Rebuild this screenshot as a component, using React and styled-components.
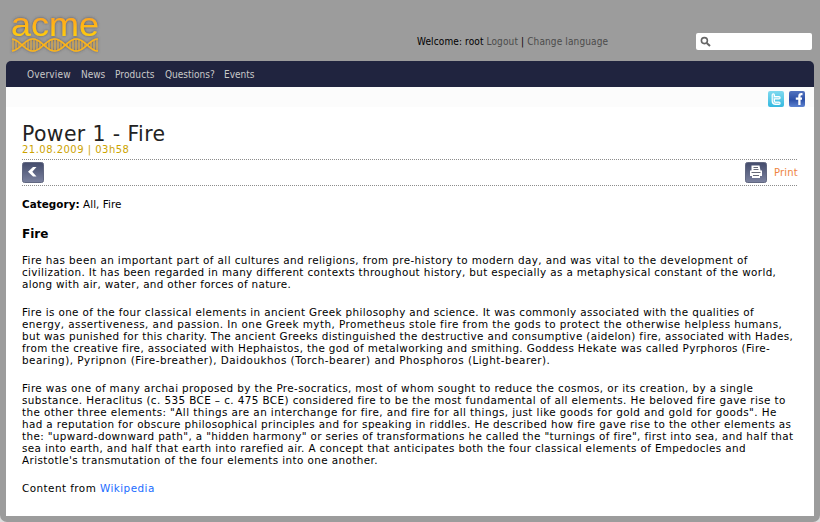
import React from "react";
import styled, { createGlobalStyle } from "styled-components";

const Global = createGlobalStyle`
  * { box-sizing: border-box; }
  body { margin: 0; background: #dedede; font-family: "DejaVu Sans", Verdana, sans-serif; font-size: 10px; color: #000; }
`;
const Shell = styled.div`
  height: 522px; padding: 0 6px 6px; background: #9c9c9c;
  border-radius: 0 0 7px 7px; display: flex; flex-direction: column;
`;
const Header = styled.header`
  height: 61px; flex: none; display: flex; align-items: flex-start;
`;
const LogoSvg = styled.svg`display: block; flex: none; width: 100px; height: 50px; margin: 9px 0 0 0; overflow: visible;`;
const Account = styled.div`
  margin: 36px 0 0 311px; width: 194px; white-space: nowrap; line-height: 12px;
  font-family: "DejaVu Sans Condensed", "DejaVu Sans", sans-serif; font-stretch: condensed;
  font-size: 10px; letter-spacing: 0.12px;
`;
const MutedLink = styled.a`color: #4b4b4b;`;
const Search = styled.label`
  margin: 33px 2px 0 auto; width: 116px; height: 17px; border-radius: 2px;
  background: #fff; display: flex; align-items: center; padding-left: 4px;
`;
const Nav = styled.nav`
  height: 26px; flex: none; background: #20243f; border-radius: 5px 5px 0 0;
  display: flex; align-items: center; gap: 10px; padding: 1px 0 0 21px;
  font-family: "DejaVu Sans Condensed", "DejaVu Sans", sans-serif; font-stretch: condensed;
`;
const NavLink = styled.a`color: #c9c9c9; width: ${(p) => p.$w}px; white-space: nowrap; letter-spacing: ${(p) => p.$track || 0}px;`;
const Social = styled.div`
  height: 20px; flex: none; background: #fcfcfc; display: flex; justify-content: flex-end;
  gap: 5px; padding: 4px 9px 0 0;
`;
const Icon = styled.svg`display: block; flex: none; overflow: visible;`;
const Content = styled.main`flex: 1; background: #fff; padding: 16px 16px 0; overflow: hidden;`;
const Title = styled.h1`margin: 0; font-size: 20.4px; font-weight: 400; line-height: 22px; color: #222; letter-spacing: 0.4px;`;
const Stamp = styled.div`line-height: 10px; margin: 0 0 4px; color: #cca300; letter-spacing: 0.48px;`;
const Rule = styled.svg`display: block; width: 776px; height: 1px;`;
const Tools = styled.div`height: 25px; display: flex; align-items: center; padding-top: 0;`;
const Print = styled.a`
  margin-left: auto; display: flex; align-items: center; gap: 7px; color: #ee8440; letter-spacing: 0.2px;
`;
const Category = styled.p`margin: 12px 0 0; line-height: 12px; font-size: 10.4px; letter-spacing: 0.05px;`;
const Heading = styled.h2`margin: 16px 0 0; font-size: 12px; line-height: 16px;`;
const Para = styled.p`margin: ${(p) => p.$top}px 0 0; line-height: 12px; font-size: 10.4px;`;
const Line = styled.span`display: block; white-space: nowrap; letter-spacing: ${(p) => p.$track}px;`;
const Blue = styled.a`color: #1a6cff;`;

const Dots = () => (
  <Rule><line x1="0" y1="0.5" x2="776" y2="0.5" stroke="#8c8c8c" strokeDasharray="1 1" /></Rule>
);

const helix = (phase) =>
  Array.from({ length: 87 }, (_, i) => `${i ? "L" : "M"}${6 + i} ${(36 + phase * 6 * Math.sin(((i - 10) / 21.7) * Math.PI)).toFixed(2)}`).join("");
const rungs = Array.from({ length: 29 }, (_, i) => {
  const x = 7 + i * 3;
  const a = 6 * Math.abs(Math.sin(((x - 16) / 21.7) * Math.PI));
  return `M${x} ${(36 - a).toFixed(2)}V${(36 + a).toFixed(2)}`;
}).join("");

const Logo = () => (
  <LogoSvg viewBox="0 0 100 50">
    <defs>
      <linearGradient id="gold" x1="0" y1="0" x2="0" y2="1">
        <stop offset="0.3" stopColor="#ffa41e" /><stop offset="0.85" stopColor="#ffd008" />
      </linearGradient>
      <filter id="glow" x="-10%" y="-20%" width="120%" height="140%">
        <feDropShadow dx="0" dy="0" stdDeviation="1.6" floodColor="#4a4a4a" floodOpacity="0.85" />
      </filter>
    </defs>
    <g filter="url(#glow)">
      <text x="5" y="27" textLength="88" lengthAdjust="spacingAndGlyphs" fontFamily="Liberation Sans, Arial, sans-serif" fontSize="33" fill="url(#gold)">acme</text>
      <g fill="none" stroke="#fdb515">
        <path d={rungs} strokeWidth="1" opacity="0.8" />
        <path d={helix(1)} strokeWidth="1.5" />
        <path d={helix(-1)} strokeWidth="1.5" />
      </g>
    </g>
  </LogoSvg>
);

const Twitter = () => (
  <Icon width="16" height="16" viewBox="0 0 16 16">
    <defs><linearGradient id="tw" x1="0" y1="0" x2="0" y2="1"><stop offset="0" stopColor="#7fd9ef" /><stop offset="1" stopColor="#35b9e0" /></linearGradient></defs>
    <rect width="16" height="16" rx="2" fill="url(#tw)" />
    <path d="M5.3 4V10q0 2.3 2.3 2.3H11M5.3 6.8H11" fill="none" stroke="#fff" strokeWidth="3.4" strokeLinecap="round" strokeLinejoin="round" />
    <path d="M5.3 4V10q0 2.3 2.3 2.3H11M5.3 6.8H11" fill="none" stroke="#8bdcf0" strokeWidth="1" strokeLinecap="round" />
  </Icon>
);
const Facebook = () => (
  <Icon width="16" height="16" viewBox="0 0 16 16">
    <defs><linearGradient id="fb" x1="0" y1="0" x2="0" y2="1"><stop offset="0" stopColor="#5273bf" /><stop offset="0.55" stopColor="#2d50a7" /><stop offset="1" stopColor="#5d83d1" /></linearGradient></defs>
    <rect width="16" height="16" rx="2" fill="url(#fb)" />
    <path d="M13.5 3.2h-1.1q-2 0-2 1.8V14M6.8 7.6h6.2" fill="none" stroke="#fff" strokeWidth="2.3" />
  </Icon>
);
const ButtonFace = ({ id, children }) => (
  <Icon width="22" height="21" viewBox="0 0 22 21">
    <defs><linearGradient id={id} x1="0" y1="0" x2="0" y2="1"><stop offset="0" stopColor="#434b6b" /><stop offset="1" stopColor="#7b829f" /></linearGradient></defs>
    <rect x="0.5" y="0.5" width="21" height="20" rx="2" fill={`url(#${id})`} stroke="#626881" />
    {children}
  </Icon>
);

const first = [
  ["Fire has been an important part of all cultures and religions, from pre-history to modern day, and was vital to the development of", 0.4],
  ["civilization. It has been regarded in many different contexts throughout history, but especially as a metaphysical constant of the world,", 0.36],
  ["along with air, water, and other forces of nature.", 0.32],
];
const second = [
  ["Fire is one of the four classical elements in ancient Greek philosophy and science. It was commonly associated with the qualities of", 0.37],
  ["energy, assertiveness, and passion. In one Greek myth, Prometheus stole fire from the gods to protect the otherwise helpless humans,", 0.435],
  ["but was punished for this charity. The ancient Greeks distinguished the destructive and consumptive (aidelon) fire, associated with Hades,", 0.36],
  ["from the creative fire, associated with Hephaistos, the god of metalworking and smithing. Goddess Hekate was called Pyrphoros (Fire-", 0.375],
  ["bearing), Pyripnon (Fire-breather), Daidoukhos (Torch-bearer) and Phosphoros (Light-bearer).", 0.49],
];
const third = [
  ["Fire was one of many archai proposed by the Pre-socratics, most of whom sought to reduce the cosmos, or its creation, by a single", 0.39],
  ["substance. Heraclitus (c. 535 BCE – c. 475 BCE) considered fire to be the most fundamental of all elements. He beloved fire gave rise to", 0.407],
  ["the other three elements: \"All things are an interchange for fire, and fire for all things, just like goods for gold and gold for goods\". He", 0.42],
  ["had a reputation for obscure philosophical principles and for speaking in riddles. He described how fire gave rise to the other elements as", 0.37],
  ["the: \"upward-downward path\", a \"hidden harmony\" or series of transformations he called the \"turnings of fire\", first into sea, and half that", 0.37],
  ["sea into earth, and half that earth into rarefied air. A concept that anticipates both the four classical elements of Empedocles and", 0.365],
  ["Aristotle's transmutation of the four elements into one another.", 0.4],
];
const Text = ({ lines, top }) => (
  <Para $top={top}>{lines.map(([t, k]) => <Line key={t} $track={k}>{t}</Line>)}</Para>
);

export default function App() {
  return (
    <>
      <Global />
      <Shell>
        <Header>
          <Logo />
          <Account>Welcome: root <MutedLink>Logout</MutedLink> | <MutedLink>Change language</MutedLink></Account>
          <Search>
            <Icon width="12" height="12" viewBox="0 0 12 12"><circle cx="4.4" cy="4.6" r="3" fill="none" stroke="#666" strokeWidth="1.6" /><path d="M6.7 6.9L10 10" stroke="#666" strokeWidth="2" /></Icon>
          </Search>
        </Header>
        <Nav>
          <NavLink $w={44} $track={0.17}>Overview</NavLink><NavLink $w={24}>News</NavLink><NavLink $w={40} $track={0.1}>Products</NavLink><NavLink $w={49}>Questions?</NavLink><NavLink $w={30}>Events</NavLink>
        </Nav>
        <Social><Twitter /><Facebook /></Social>
        <Content>
          <Title>Power 1 - Fire</Title>
          <Stamp>21.08.2009 | 03h58</Stamp>
          <Dots />
          <Tools>
            <ButtonFace id="back"><path d="M6 9.8L11 5H14.5L10.3 9.8L14.5 14.6H11Z" fill="#fff" /></ButtonFace>
            <Print>
              <ButtonFace id="print">
                <path d="M6.5 3.5h8l1 5H17v5.5h-2v2H7v-2H5V8.5h1.5z" fill="#fff" />
                <path d="M8.5 5.5h4.5M8.5 7.5h5M6.5 10.5h9M8 13.5h6" stroke="#666a78" strokeWidth="1" />
              </ButtonFace>
              Print
            </Print>
          </Tools>
          <Dots />
          <Category><b>Category:</b> All, Fire</Category>
          <Heading>Fire</Heading>
          <Text lines={first} top={12} />
          <Text lines={second} top={16} />
          <Text lines={third} top={16} />
          <Para $top={16}><Line $track={0.45}>Content from <Blue>Wikipedia</Blue></Line></Para>
        </Content>
      </Shell>
    </>
  );
}
